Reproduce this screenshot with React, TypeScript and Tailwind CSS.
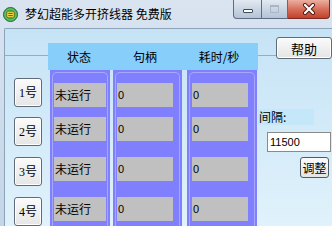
import React from "react";

const cjk = "font-['Noto_Sans_CJK_SC',sans-serif]";

function RowButton({ label, mt }: { label: string; mt: string }) {
  return (
    <div
      className={`${mt} ml-[9px] w-[28px] h-[29px] rounded-[3px] border border-[#5f6b78] bg-gradient-to-b from-[#fbfbfb] to-[#e6e6e6] flex items-center justify-center text-[12px] text-black font-['Liberation_Serif','Noto_Sans_CJK_SC',serif] leading-none shadow-[inset_0_0_0_1px_#ffffff]`}
    >
      {label}
    </div>
  );
}

const rowMt = ["mt-[10px]", "mt-[10px]", "mt-[16px]", "mt-[16px]"];
const btnMt = ["mt-[22px]", "mt-[10px]", "mt-[11px]", "mt-[11px]"];

function Column({
  width,
  cellMl,
  cellW,
  text,
  sans,
}: {
  width: string;
  cellMl: string;
  cellW: string;
  text: string;
  sans?: boolean;
}) {
  return (
    <div className={`${width} bg-[#8080ff] flex flex-col`}>
      <div className="mt-[2px] mx-[2px] flex-1 rounded-t-[5px] border-t border-x border-[#a6a6ff] flex flex-col">
        {rowMt.map((m, i) => (
          <div
            key={i}
            className={`${m} ${cellMl} ${cellW} h-[24px] bg-[#c0c0c0] flex items-center pl-[1px] text-black leading-none ${
              sans ? "text-[11px] font-['Liberation_Sans',sans-serif]" : `text-[12px] ${cjk}`
            }`}
          >
            {text}
          </div>
        ))}
      </div>
    </div>
  );
}

export default function App() {
  return (
    <div
      className={`w-[332px] h-[226px] overflow-hidden flex flex-col bg-gradient-to-b from-[#d9e4f0] to-[#c3d5e8] ${cjk}`}
    >
      {/* Title bar */}
      <div className="h-[28px] flex items-center shrink-0">
        <svg className="ml-[3px] w-[15px] h-[15px]" viewBox="0 0 15 15">
          <circle cx="7.5" cy="7.5" r="7" fill="#3ea84c" stroke="#1f6e2c" strokeWidth="1" />
          <circle cx="7.5" cy="7.5" r="5.6" fill="none" stroke="#7fd28a" strokeWidth="0.8" />
          <rect x="3.8" y="4.3" width="7.4" height="6.4" rx="1.6" fill="#f5d83c" stroke="#7a5c10" strokeWidth="0.7" />
          <line x1="5.3" y1="6.4" x2="9.7" y2="6.4" stroke="#5a4210" strokeWidth="0.9" />
          <line x1="5.3" y1="8.6" x2="9.7" y2="8.6" stroke="#5a4210" strokeWidth="0.9" />
        </svg>
        <span className="ml-[7px] text-[12px] text-black leading-none whitespace-nowrap">
          梦幻超能多开挤线器 免费版
        </span>
        <div className="ml-auto mr-[2px] self-start flex h-[19px]">
          <div className="w-[29px] h-full rounded-bl-[4px] border border-t-0 border-[#5c6d84] bg-gradient-to-b from-[#e2e9f1] to-[#b4c3d5] flex items-center justify-center">
            <span className="mt-[3px] w-[10px] h-[4px] bg-white border border-[#3c4b5e] rounded-[1px]" />
          </div>
          <div className="w-[26px] h-full border-b border-r border-[#5c6d84] bg-gradient-to-b from-[#e2e9f1] to-[#b4c3d5] flex items-center justify-center">
            <span className="w-[9px] h-[8px] border border-[#a8b6c7] border-t-2" />
          </div>
          <div className="w-[42px] h-full rounded-br-[4px] border-b border-r border-[#7a2a20] bg-gradient-to-b from-[#eab0a0] via-[#d6705c] to-[#c2402a] flex items-center justify-center">
            <svg className="w-[14px] h-[12px]" viewBox="0 0 14 12">
              <path d="M3 2 L11 10 M11 2 L3 10" stroke="#4a1810" strokeWidth="4" strokeLinecap="round" />
              <path d="M3 2 L11 10 M11 2 L3 10" stroke="#ffffff" strokeWidth="2.2" strokeLinecap="round" />
            </svg>
          </div>
        </div>
      </div>

      {/* Client area */}
      <div className="flex-1 ml-[4px] border-l border-t border-[#8da3ba] rounded-tl-[2px] bg-gradient-to-b from-[#c6e3f6] to-[#e0f2fb] flex min-h-0">
        {/* Left buttons */}
        <div className="w-[43px] flex flex-col shrink-0">
          <div className="h-[27px] border-b border-[#94adc3]" />
          {["1号", "2号", "3号", "4号"].map((l, i) => (
            <RowButton key={l} label={l} mt={btnMt[i]} />
          ))}
        </div>

        {/* Table */}
        <div className="w-[210px] flex flex-col pt-[14px] shrink-0">
          <div className="h-[27px] bg-[#87cefa] flex items-center text-[12px] text-black leading-none">
            <div className="w-[62px] text-center">状态</div>
            <div className="w-[70px] text-center">句柄</div>
            <div className="w-[78px] text-center">耗时/秒</div>
          </div>
          <div className="flex-1 flex pl-[2px]">
            <Column width="w-[60px]" cellMl="ml-[1px]" cellW="w-[52px]" text="未运行" />
            <div className="w-[3px]" />
            <Column width="w-[69px]" cellMl="ml-[1px]" cellW="w-[56px]" text="0" sans />
            <div className="w-[5px]" />
            <Column width="w-[70px]" cellMl="ml-[2px]" cellW="w-[56px]" text="0" sans />
          </div>
        </div>

        {/* Right panel */}
        <div className="flex-1 flex flex-col">
          <div className="flex items-start">
            <div className="w-[18px] h-[27px] border-b border-[#94adc3]" />
            <div className="mt-[8px] w-[56px] h-[22px] rounded-[3px] border border-[#5f6b78] bg-gradient-to-b from-[#fbfbfb] to-[#e4e4e4] flex items-center justify-center text-[13px] text-black leading-none shadow-[inset_0_0_0_1px_#ffffff]">
              帮助
            </div>
          </div>
          <div className="mt-[50px] w-[56px] h-[16px] bg-[#c4e8fa] flex items-center pl-[1px] text-[12px] text-black leading-none">
            间隔:
          </div>
          <div className="mt-[7px] ml-[9px] w-[64px] h-[20px] bg-white border border-[#8a8a8a] flex items-center pl-[2px] text-[11px] text-black font-['Liberation_Sans',sans-serif] leading-none">
            11500
          </div>
          <div className="mt-[5px] ml-[42px] w-[29px] h-[21px] rounded-[3px] border border-[#4f5a66] bg-gradient-to-b from-[#fbfbfb] to-[#e4e4e4] flex items-center justify-center text-[12px] text-black leading-none">
            调整
          </div>
        </div>
      </div>
    </div>
  );
}
